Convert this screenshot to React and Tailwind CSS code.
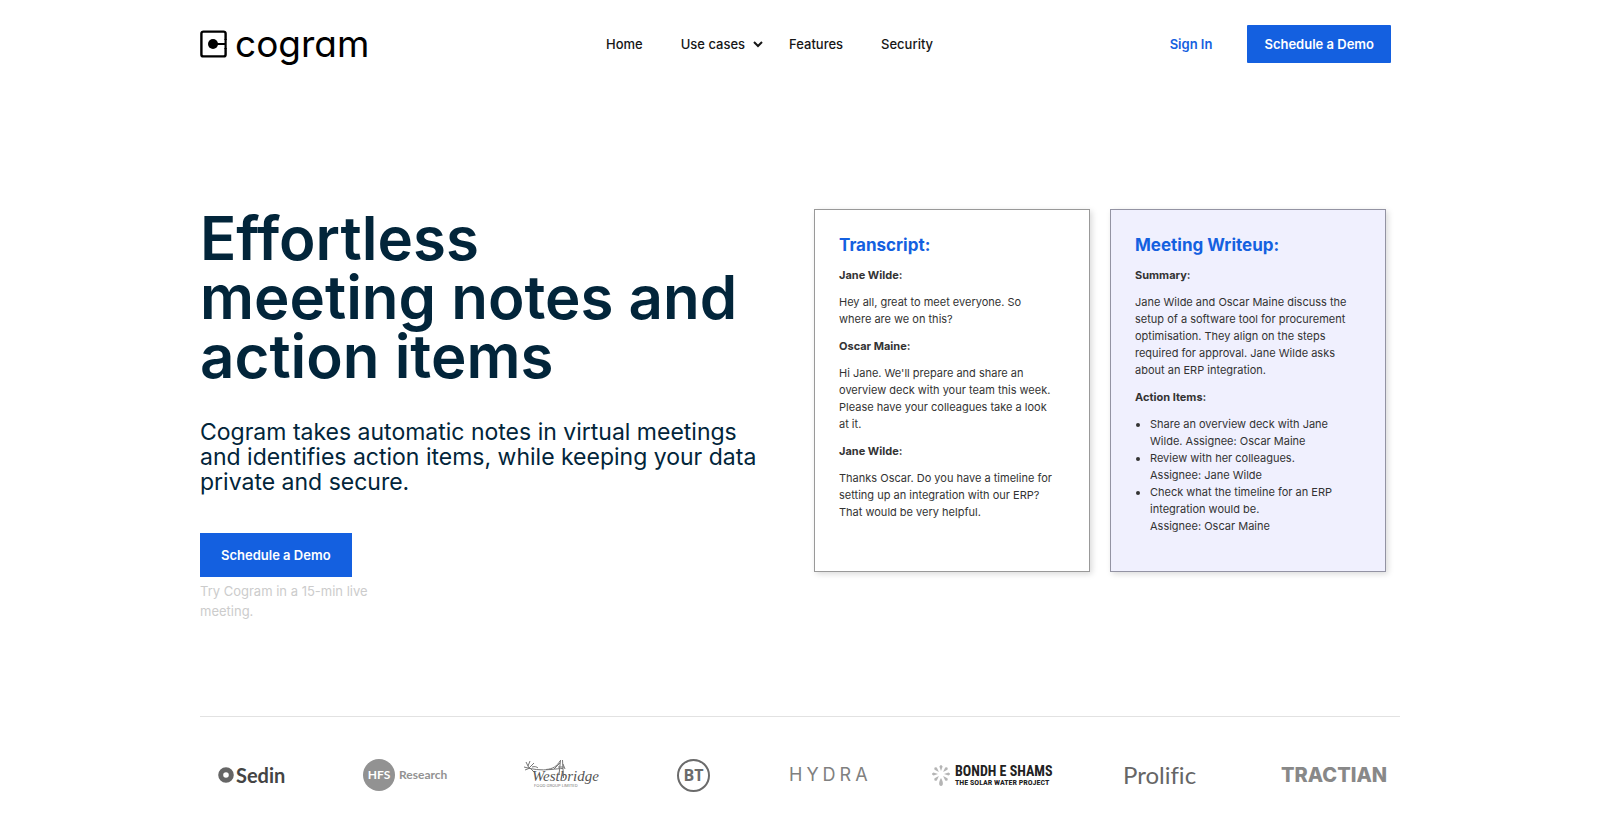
import React from "react";

const navLink = "text-[13px] leading-5 font-medium text-[#161616]";

function CogramLogo() {
  return (
    <a href="#" aria-label="cogram" className="flex items-center gap-2 text-black">
      <svg width="27" height="28" viewBox="0 0 27 28" fill="none" aria-hidden="true">
        <path d="M25.6 10V3.6a2 2 0 0 0-2-2H3.4a2 2 0 0 0-2 2v20.8a2 2 0 0 0 2 2h20.2a2 2 0 0 0 2-2V18" stroke="currentColor" strokeWidth="2.4" />
        <path d="M25.6 9v10M13 14h12.6" stroke="currentColor" strokeWidth="2.2" />
        <circle cx="13" cy="14" r="5" fill="currentColor" />
      </svg>
      <span className="text-[37px] leading-10" style={{ fontFeatureSettings: '"cv11"' }}>cogram</span>
    </a>
  );
}

function Header() {
  return (
    <header className="flex items-center justify-between pt-6 pr-[9px]">
      <CogramLogo />
      <nav className="flex items-center gap-[38px]">
        <a href="#" className={navLink}>Home</a>
        <button type="button" className="-mr-3 flex items-center gap-2 text-[13px] leading-5 font-medium text-[#161616]">
          Use cases
          <svg width="10" height="7" viewBox="0 0 10 7" fill="none" aria-hidden="true">
            <path d="M1 1l4 4 4-4" stroke="currentColor" strokeWidth="2" />
          </svg>
        </button>
        <a href="#" className={navLink}>Features</a>
        <a href="#" className={navLink}>Security</a>
      </nav>
      <div className="flex items-center gap-[35px]">
        <a href="#" className="text-[13px] leading-5 font-semibold text-[#1460e0]">Sign In</a>
        <a href="#" className="rounded-[1px] bg-[#1460e0] px-[17px] py-[9px] text-[13px] leading-5 font-semibold text-white">Schedule a Demo</a>
      </div>
    </header>
  );
}

function Card({ title, className, children }) {
  return (
    <section className={`flex flex-1 flex-col gap-[10px] border pt-6 pr-9 pb-9 pl-6 text-[11px] leading-[17px] text-[#333] shadow-[2px_2px_6px_rgba(0,0,0,0.15)] ${className}`}>
      <h2 className="text-[17px] leading-[23px] font-bold whitespace-nowrap text-[#1460e0]">{title}</h2>
      {children}
    </section>
  );
}

function Hero() {
  return (
    <main className="mt-[145px] flex items-start justify-between pr-[14px]">
      <div className="w-[580px]">
        <h1 className="text-6xl leading-[59px] font-semibold text-[#02253a]">
          Effortless
          <br />
          meeting notes and action items
        </h1>
        <p className="mt-[34px] w-[570px] text-[23px] leading-[25px] text-[#02253a]">
          Cogram takes automatic notes in virtual meetings and identifies action items, while keeping your data private and secure.
        </p>
        <a href="#" className="mt-[38px] inline-block bg-[#1460e0] px-[21px] py-3 text-[13px] leading-5 font-semibold text-white">Schedule a Demo</a>
        <p className="mt-1 w-[190px] text-[13px] leading-5 text-[#cccccc]">Try Cogram in a 15-min live meeting.</p>
      </div>
      <div className="flex w-[572px] gap-5">
        <Card title="Transcript:" className="border-[#999] bg-white">
          <h3 className="font-bold">Jane Wilde:</h3>
          <p>Hey all, great to meet everyone. So where are we on this?</p>
          <h3 className="font-bold">Oscar Maine:</h3>
          <p>Hi Jane. We'll prepare and share an overview deck with your team this week. Please have your colleagues take a look at it.</p>
          <h3 className="font-bold">Jane Wilde:</h3>
          <p>Thanks Oscar. Do you have a timeline for setting up an integration with our ERP? That would be very helpful.</p>
        </Card>
        <Card title="Meeting Writeup:" className="border-[#9393a3] bg-[#f0f0fe]">
          <h3 className="font-bold">Summary:</h3>
          <p>Jane Wilde and Oscar Maine discuss the setup of a software tool for procurement optimisation. They align on the steps required for approval. Jane Wilde asks about an ERP integration.</p>
          <h3 className="font-bold">Action Items:</h3>
          <ul className="list-disc pl-[15px]">
            <li>Share an overview deck with Jane Wilde. Assignee: Oscar Maine</li>
            <li>Review with her colleagues.<br />Assignee: Jane Wilde</li>
            <li>Check what the timeline for an ERP integration would be.<br />Assignee: Oscar Maine</li>
          </ul>
        </Card>
      </div>
    </main>
  );
}

const rays = [0, 45, 90, 135, 225, 270, 315];

function Customers() {
  return (
    <footer className="mt-[95px] flex h-[117px] items-center border-t border-[#e2e2e2] pl-[18px]">
      <div className="flex w-[67px] shrink-0 items-center gap-[2px]">
        <svg className="shrink-0" width="16" height="16" viewBox="0 0 16 16" fill="none" aria-hidden="true">
          <circle cx="8" cy="8" r="5.3" stroke="#666" strokeWidth="5" />
        </svg>
        <span className="font-[Lato] text-xl leading-6 font-bold text-[#444]">Sedin</span>
      </div>
      <div className="ml-[78px] flex w-[83px] shrink-0 items-center gap-1">
        <span className="flex size-8 shrink-0 items-center justify-center rounded-full bg-[#929292] font-[Lato] text-xs font-bold text-white">HFS</span>
        <span className="font-[Lato] text-xs font-bold text-[#929292]">Research</span>
      </div>
      <svg className="ml-[76px] shrink-0" width="80" height="32" viewBox="0 0 80 32" fill="none" role="img" aria-label="Westbridge Food Group Limited">
        <path d="M2 8c8 2.500 17 3.500 27 2.500c5-.5 9-1 12-1M4 3l3 6 5-5M8 2l-2 5M3 11l5-2 4 4M10 8c3-1 5 0 6 1M37 16L38.500 1M40.500 1L41.500 19M36 8h6M38 2C35 7 31 10 24 10.500M38 4l-6 6M41 5l2 5" stroke="#777" strokeWidth="1" />
        <text x="10" y="22" fontFamily="Liberation Serif, serif" fontStyle="italic" fontSize="15" fill="#555">Westbridge</text>
        <text x="12" y="28" fontFamily="Inter, sans-serif" fontSize="4" fill="#777">FOOD GROUP LIMITED</text>
      </svg>
      <span className="ml-[75px] flex size-[33px] shrink-0 items-center justify-center rounded-full border-2 border-[#6b6b6b] font-[Open_Sans] text-base font-bold text-[#6b6b6b]">BT</span>
      <span className="ml-[79px] w-[84px] shrink-0 text-lg tracking-[4px] text-[#808080]">HYDRA</span>
      <div className="ml-[58px] flex w-[118px] shrink-0 items-center gap-1">
        <svg className="shrink-0" width="20" height="24" viewBox="0 0 20 24" aria-hidden="true">
          {rays.map((angle) => (
            <path key={angle} d="M10 8L8.400 3.500Q10 .4 11.600 3.500z" fill="#b5b5b5" transform={`rotate(${angle} 10 11)`} />
          ))}
          <path d="M10 15c-2.500 4-2.500 8 0 8s2.500-4 0-8z" fill="#b5b5b5" />
        </svg>
        <div className="flex flex-col font-['Roboto_Condensed','Roboto',sans-serif] font-bold whitespace-nowrap text-[#222]">
          <span className="text-sm leading-[14px]">BONDH E SHAMS</span>
          <span className="text-[8px] leading-[9px]">THE SOLAR WATER PROJECT</span>
        </div>
      </div>
      <span className="ml-[74px] w-[71px] shrink-0 font-[Lato] text-2xl text-[#666]" style={{ fontVariantLigatures: "none" }}>Prolific</span>
      <svg className="ml-[87px] shrink-0" width="106" height="24" viewBox="0 0 106 24" role="img" aria-label="Tractian">
        <text x="0" y="19" fontFamily="Inter, sans-serif" fontWeight="800" fontSize="20" fill="#888">TRACTIAN</text>
      </svg>
    </footer>
  );
}

export default function App() {
  return (
    <div className="min-h-screen bg-white font-[Inter,sans-serif]">
      <div className="mx-auto max-w-[1200px]">
        <Header />
        <Hero />
        <Customers />
      </div>
    </div>
  );
}
